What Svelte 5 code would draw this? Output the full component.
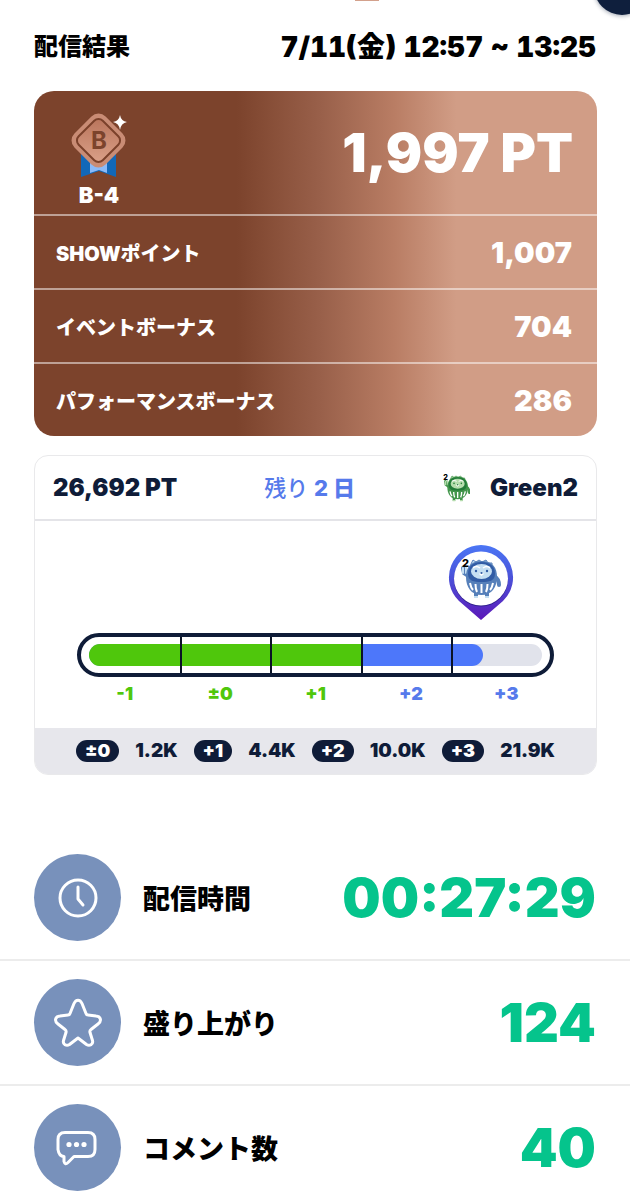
<script lang="ts">
    interface Bonus {
        label: string;
        value: string;
    }

    interface Border {
        rank: string;
        points: string;
    }

    const bonuses: Bonus[] = [
        { label: "SHOWポイント", value: "1,007" },
        { label: "イベントボーナス", value: "704" },
        { label: "パフォーマンスボーナス", value: "286" },
    ];

    const steps = ["-1", "±0", "+1", "+2", "+3"];
    const keepSteps = 3;
    const progress = 87;

    const borders: Border[] = [
        { rank: "±0", points: "1.2K" },
        { rank: "+1", points: "4.4K" },
        { rank: "+2", points: "10.0K" },
        { rank: "+3", points: "21.9K" },
    ];

    const stats = [
        { icon: "clock", label: "配信時間", value: "00:27:29" },
        { icon: "star", label: "盛り上がり", value: "124" },
        { icon: "comment", label: "コメント数", value: "40" },
    ];
</script>

{#snippet daruma(dark: string, mid: string, light: string)}
    <path d="M9 18 3 14 2 9M33 17q5 3 5 9" fill="none" stroke={mid} stroke-width="4" stroke-linecap="round" />
    <path d="M2 14V9M5 14V8" stroke={light} stroke-width="2" stroke-linecap="round" />
    <path d="M10 5 12 1l3 2 3-2 3 2 4-2 2 3 4 0v5H9z" fill={light} stroke={mid} />
    <path d="M15 32v6M26 32v6" stroke={mid} stroke-width="4" />
    <path d="M13 38h4M24 38h4" stroke={light} stroke-width="2" />
    <path d="M20.500 2C9 2 5 9 5 18c0 10 5 18 15.500 18S36 28 36 18C36 9 32 2 20.500 2z" fill={mid} />
    <path d="M20.500 3C11 3 7 8 7 15s6 8 13.500 8S34 22 34 15 30 3 20.500 3z" fill={dark} />
    <ellipse cx="20.500" cy="12.500" rx="10.500" ry="7.500" fill={light} />
    <path d="M12 9q3-3 7 0M22 9q4-3 7 0" fill="none" stroke="#fff" stroke-width="1.500" />
    <circle cx="15" cy="12" r="1.200" fill={dark} />
    <circle cx="26" cy="12" r="1.200" fill={dark} />
    <path d="M18 15q2.500-3 5 0l-2.500 2z" fill="#fff" />
    <circle cx="20.500" cy="14" r="1.100" fill={dark} />
    <path d="M9 24q1 5 3 7M14.500 25q0 5 1.500 8M20.500 25v9M26.500 25q0 5-1.500 8M32 24q-1 5-3 7" fill="none" stroke="#fff" stroke-width="2" />
{/snippet}

<main class="result">
    <div class="previous"></div>
    <button class="close" aria-label="閉じる"></button>

    <header class="title">
        <h1>配信結果</h1>
        <time>7/11(金) 12:57 ~ 13:25</time>
    </header>

    <section class="points">
        <div class="total">
            <div class="rank">
                <svg width="60" height="68" viewBox="0 0 60 68" aria-hidden="true">
                    <defs>
                        <linearGradient id="medal" x1="0" y1="0" x2="1" y2="1">
                            <stop offset="0" stop-color="#b8735a" />
                            <stop offset="1" stop-color="#dca28a" />
                        </linearGradient>
                    </defs>
                    <path d="M12 41h35v23l-17-6-18 6z" fill="#1268b8" />
                    <path d="M21 48h17v12l-8-3-9 3z" fill="#8bbaf8" />
                    <rect x="7.500" y="5.500" width="44" height="44" rx="10" transform="rotate(45 29.500 27.500)" fill="#c98c75" />
                    <rect x="12.500" y="10.500" width="34" height="34" rx="6" transform="rotate(45 29.500 27.500)" fill="url(#medal)" stroke="#7b412b" stroke-width="2" />
                    <text x="30" y="36" text-anchor="middle">B</text>
                    <path d="M51 2q1 6 7 7-6 1-7 8-1-7-7-8 6-1 7-7z" fill="#fff" />
                </svg>
                <span>B-4</span>
            </div>
            <strong>1,997 PT</strong>
        </div>
        {#each bonuses as bonus}
            <div class="bonus">
                <span class="bonus-label">{bonus.label}</span>
                <span class="bonus-value">{bonus.value}</span>
            </div>
        {/each}
    </section>

    <section class="level">
        <div class="level-header">
            <span>26,692 PT</span>
            <span class="remaining">残り <b>2 日</b></span>
            <span class="group">
                <svg width="28" height="28" viewBox="-3 -2 42 42" aria-hidden="true">
                    {@render daruma("#237b39", "#43964c", "#b5ddad")}
                    <text x="-1" y="7" class="mark">2</text>
                </svg>
                Green2
            </span>
        </div>

        <div class="gauge">
            <div class="marker-lane">
                <svg class="marker" style="left: {progress - 1}%" width="66" height="76" viewBox="0 0 66 76" aria-hidden="true">
                    <defs>
                        <linearGradient id="pin" x1="0" y1="0" x2="0" y2="1">
                            <stop offset="0" stop-color="#4b76f5" />
                            <stop offset="0.400" stop-color="#4a55db" />
                            <stop offset="1" stop-color="#5c18b8" />
                        </linearGradient>
                    </defs>
                    <path d="M33 0a32.500 32.500 0 0 0-22 56l22 19 22-19A32.500 32.500 0 0 0 33 0z" fill="url(#pin)" />
                    <circle cx="33" cy="34.500" r="27" fill="#31208e" />
                    <circle cx="33" cy="33.500" r="27" fill="#fff" />
                    <g transform="translate(13 14)">
                        {@render daruma("#315ca5", "#5680ba", "#c5dff2")}
                    </g>
                    <text x="14" y="22" class="mark">2</text>
                </svg>
            </div>
            <div class="bar">
                <div class="track">
                    <div class="fill" style="width: {progress}%"></div>
                    <div class="fill-keep" style="width: {keepSteps * 20}%"></div>
                </div>
                <div class="ticks">
                    {#each steps as _}
                        <i></i>
                    {/each}
                </div>
            </div>
            <div class="steps">
                {#each steps as step, i}
                    <span class:up={i >= keepSteps}>{step}</span>
                {/each}
            </div>
        </div>

        <div class="borders">
            {#each borders as border}
                <span class="pill">{border.rank}</span>
                <span>{border.points}</span>
            {/each}
        </div>
    </section>

    <section class="stats">
        {#each stats as stat}
            <div class="stat">
                <span class="stat-icon">
                    <svg width="52" height="52" viewBox="0 0 52 52" aria-hidden="true">
                        {#if stat.icon === "clock"}
                            <circle cx="26" cy="26" r="18" />
                            <path d="M26 15v12l5 6" />
                        {:else if stat.icon === "star"}
                            <path d="M22 6.500c2-4.500 6-4.500 8 0l4 10q.5 1.500 2 1.500l8 1c5 .5 6 5 2 8l-7 5.500q-1.500 1-1 3l2.500 8c1 4-3 6-6 4L26 41l-8.500 6.500c-3 2-7 0-6-4l2.500-8q.5-2-1-3L6 27c-4-3-3-7.500 2-8l8-1q1.500 0 2-1.500z" />
                        {:else}
                            <path d="M13 10.500h23q7 0 7 7v10q0 7-7 7H22l-6 6q-3 3-4-1v-5q-5 0-6-7v-10q0-7 7-7z" />
                            <g class="dots">
                                <circle cx="17" cy="22.500" r="2.600" />
                                <circle cx="24.500" cy="22.500" r="2.600" />
                                <circle cx="32" cy="22.500" r="2.600" />
                            </g>
                        {/if}
                    </svg>
                </span>
                <span class="stat-label">{stat.label}</span>
                <span class="stat-value">{stat.value}</span>
            </div>
        {/each}
    </section>
</main>

<style>
    :global(body) {
        margin: 0;
        background: #fff;
    }

    .result {
        position: relative;
        overflow: hidden;
        font-family: Inter, "Noto Sans CJK JP", sans-serif;
        font-weight: 900;
        color: #000;
    }

    .previous {
        position: absolute;
        top: 0;
        left: 355px;
        width: 24px;
        height: 1px;
        background: #d3a18c;
    }

    .close {
        position: absolute;
        top: -41px;
        right: -20px;
        width: 56px;
        height: 56px;
        padding: 0;
        border: none;
        border-radius: 50%;
        background: #0f1f3d;
        box-shadow: 0 1px 4px rgba(15, 31, 61, 0.4);
    }

    .title {
        display: flex;
        justify-content: space-between;
        align-items: center;
        padding: 27px 34px 24px;
        line-height: 40px;
    }

    h1 {
        margin: 0;
        font-size: 24px;
        font-weight: 900;
    }

    time {
        font-size: 28px;
        font-variant-numeric: tabular-nums;
    }

    .points {
        margin: 0 33px 0 34px;
        border-radius: 20px;
        background: linear-gradient(90deg, #7c432c 36%, #99604a 51%, #b97d64 64%, #d19d86 75%);
        color: #fff;
        overflow: hidden;
    }

    .total {
        display: flex;
        justify-content: space-between;
        align-items: center;
        height: 123px;
        padding: 0 24px 0 35px;
    }

    .rank {
        display: flex;
        flex-direction: column;
        align-items: center;
        gap: 2px;
        padding-top: 14px;
        font-size: 22px;
        line-height: 24px;
    }

    .rank text {
        font-size: 24px;
        font-weight: 700;
        fill: #7c432c;
    }

    .total strong {
        font-size: 54px;
        font-weight: 900;
        line-height: 64px;
    }

    .bonus {
        display: flex;
        justify-content: space-between;
        align-items: center;
        height: 72px;
        padding: 0 25px 0 22px;
        border-top: 2px solid rgba(255, 255, 255, 0.5);
    }

    .bonus-label {
        font-size: 20px;
    }

    .bonus-value {
        font-size: 29px;
    }

    .level {
        margin: 19px 33px 0 34px;
        border: 1px solid #e9e9eb;
        border-radius: 14px;
        color: #0f1c38;
        overflow: hidden;
    }

    .level-header {
        display: flex;
        justify-content: space-between;
        align-items: center;
        height: 63px;
        padding: 0 18px;
        border-bottom: 2px solid #e4e4e8;
        font-size: 24px;
        line-height: 32px;
    }

    .remaining {
        color: #567aeb;
        font-size: 22px;
        font-weight: 500;
    }

    .remaining b {
        font-weight: 800;
    }

    .group {
        display: flex;
        align-items: center;
        gap: 20px;
    }

    .mark {
        font-size: 11px;
        font-weight: 800;
        fill: #000;
    }

    .gauge {
        padding: 24px 42px 22px;
    }

    .marker-lane {
        position: relative;
        height: 88px;
        margin: 0 10px 0 14px;
    }

    .marker {
        position: absolute;
        top: 0;
        transform: translateX(-50%);
    }

    .bar {
        display: grid;
        align-items: center;
        height: 36px;
        padding: 0 8px;
        border: 4px solid #0f1c38;
        border-radius: 22px;
    }

    .track,
    .ticks {
        grid-area: 1 / 1;
    }

    .track {
        display: grid;
        height: 22px;
        border-radius: 11px;
        background: #e1e3eb;
        overflow: hidden;
    }

    .fill,
    .fill-keep {
        grid-area: 1 / 1;
    }

    .fill {
        border-radius: 11px;
        background: #4d77fa;
    }

    .fill-keep {
        background: #4fc70c;
    }

    .ticks {
        display: grid;
        grid-template-columns: repeat(5, 1fr);
        height: 36px;
    }

    .ticks i:not(:first-child) {
        border-left: 2px solid #0a1326;
    }

    .steps {
        display: grid;
        grid-template-columns: repeat(5, 1fr);
        padding-top: 5px;
        font-size: 18px;
        line-height: 24px;
        text-align: center;
        color: #4fc70c;
    }

    .steps .up {
        color: #567aeb;
    }

    .borders {
        display: flex;
        justify-content: center;
        align-items: center;
        gap: 16px;
        height: 46px;
        background: #e7e7ec;
        font-size: 19px;
        line-height: 22px;
    }

    .pill {
        padding: 0 9px;
        border-radius: 11px;
        background: #0f1c38;
        color: #fff;
        font-size: 18px;
    }

    .stats {
        padding-top: 61px;
    }

    .stat {
        display: flex;
        align-items: center;
        gap: 22px;
        padding: 18px 34px;
    }

    .stat + .stat {
        border-top: 2px solid #ececec;
    }

    .stat-icon {
        display: flex;
        justify-content: center;
        align-items: center;
        width: 87px;
        height: 87px;
        border-radius: 50%;
        background: #7891bb;
    }

    .stat-icon svg {
        fill: none;
        stroke: #fff;
        stroke-width: 3;
        stroke-linecap: round;
        stroke-linejoin: round;
    }

    .stat-icon .dots {
        fill: #fff;
        stroke: none;
    }

    .stat-label {
        font-size: 27px;
    }

    .stat-value {
        margin-left: auto;
        color: #05c48c;
        font-size: 54px;
        line-height: 66px;
    }
</style>
